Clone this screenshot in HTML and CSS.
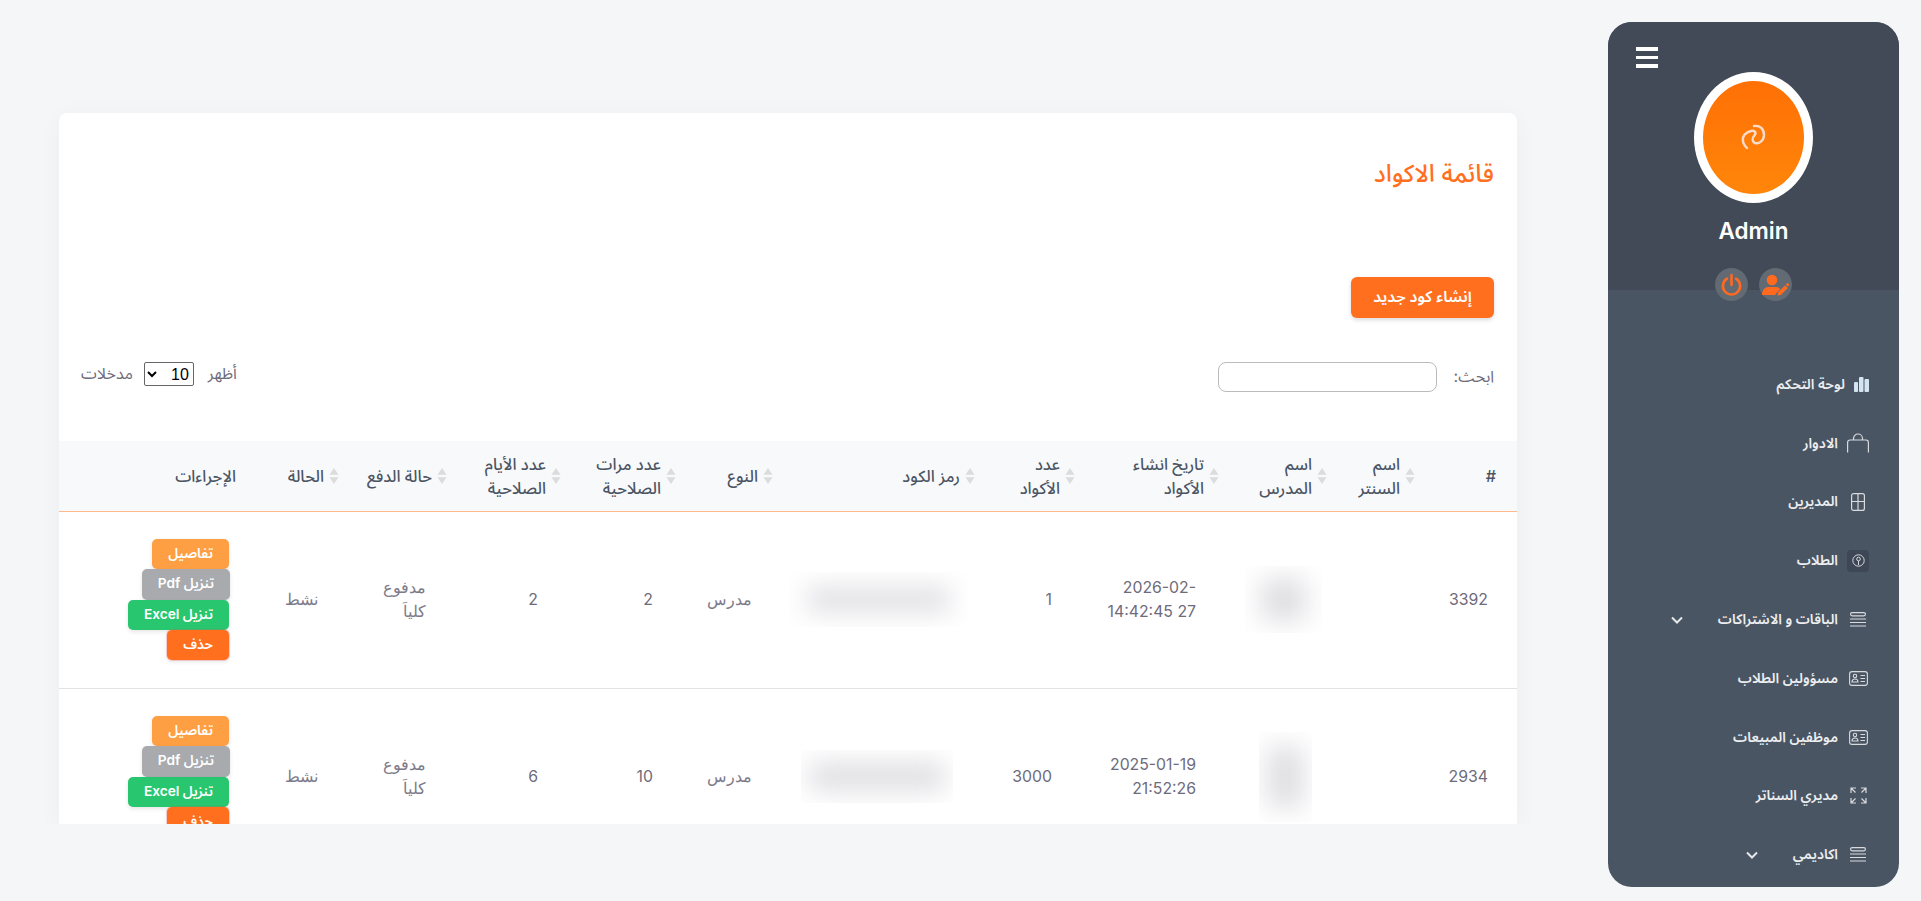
FILE: index.html
```html
<!DOCTYPE html>
<html lang="ar" dir="rtl">
<head>
  <meta charset="UTF-8">
  <title>قائمة الاكواد</title>
  <link rel="stylesheet" href="styles.css">
</head>
<body>

  <aside class="sidebar">
    <div class="side-head">
      <div class="burger"><span></span><span></span><span></span></div>
      <div class="avatar">
        <svg width="28" height="30" viewBox="0 0 28 30" fill="none" stroke="#fbdccb" stroke-width="2.4" stroke-linecap="round"><path d="M14 3c6-1 10 3 10 9 0 6-5 9-9 8-3-1-3-5-1-7"/><path d="M14 13c3-3 1-6-3-5-5 1-9 5-8 10 0 3 2 5 4 7"/></svg>
      </div>
      <div class="side-name">Admin</div>
      <div class="side-actions">
        <a class="round-btn"><svg width="27" height="22" viewBox="0 0 27 22" fill="#ff6a1f"><circle cx="10" cy="6" r="5.3"/><path d="M0 21c0-5 3-8 6-8h8c2 0 3.500 1 4.300 2l-4.800 5-.3 1z"/><path d="M15.500 21.500l.6-3.200 7-7.100 2.700 2.700-7 7z"/><path d="M23.800 10.500l1-1c.6-.5 1.300-.5 1.800 0l.4.400c.3.500.3 1.200-.2 1.700l-1 1z"/></svg></a>
        <a class="round-btn"><svg width="21" height="23" viewBox="0 0 21 23" fill="none" stroke="#ff6a1f" stroke-width="2.6" stroke-linecap="round"><path d="M10.500 2v10"/><path d="M6 5.600a8.600 8.600 0 1 0 9 0"/></svg></a>
      </div>
    </div>
    <nav class="side-nav">
      <a class="nav-item"><span class="nav-icon nav-icon-sm"><svg width="15" height="15" viewBox="0 0 15 15" fill="#d5e4f2"><rect x="0" y="5" width="4" height="10" rx="1"/><rect x="5" y="0" width="4.500" height="15" rx="1"/><rect x="10.500" y="2" width="4.500" height="13" rx="1"/></svg></span>لوحة التحكم</a>
      <a class="nav-item"><span class="nav-icon"><svg width="22" height="20" viewBox="0 0 22 20" fill="none" stroke="#d8dadd" stroke-width="1.200"><path d="M.6 19.500V9.500c0-1.500.9-2.500 2.400-2.500h16c1.500 0 2.400 1 2.400 2.500v10"/><path d="M6.500 7V5.500a4.500 4.500 0 0 1 9 0V7"/></svg></span>الادوار</a>
      <a class="nav-item"><span class="nav-icon"><svg width="14" height="18" viewBox="0 0 14 18" fill="none" stroke="#d8dadd" stroke-width="1.200"><rect x=".6" y=".6" width="12.800" height="16.800" rx="2"/><path d="M7 .6v16.800M.6 8.500h12.800"/></svg></span>المديرين</a>
      <a class="nav-item"><span class="nav-icon nav-icon-on"><svg width="13" height="13" viewBox="0 0 13 13" fill="none" stroke="#d8dadd" stroke-width="1"><circle cx="6.500" cy="6.500" r="5.700"/><circle cx="6.500" cy="5" r="1.800"/><path d="M6.500 7v4"/></svg></span>الطلاب</a>
      <a class="nav-item"><span class="nav-icon"><svg width="16" height="15" viewBox="0 0 16 15" fill="none" stroke="#d8dadd" stroke-width="1.200"><rect x=".6" y=".6" width="14.800" height="3.200" rx="1.500"/><path d="M0 7h16M0 10.500h16M0 14h16"/></svg></span>الباقات و الاشتراكات<svg class="chev" width="12" height="8" viewBox="0 0 12 8" fill="none" stroke="#e6e8eb" stroke-width="2"><path d="M1 1.500l5 5 5-5"/></svg></a>
      <a class="nav-item"><span class="nav-icon"><svg width="19" height="15" viewBox="0 0 19 15" fill="none" stroke="#d8dadd" stroke-width="1.100"><rect x=".6" y=".6" width="17.800" height="13.800" rx="2.500"/><circle cx="6" cy="5" r="1.700"/><path d="M3 11c0-2 1.300-3 3-3s3 1 3 3zM11.500 4.500h4.500M11.500 7.500h4.500M11.500 10.500h4.500"/></svg></span>مسؤولين الطلاب</a>
      <a class="nav-item"><span class="nav-icon"><svg width="19" height="15" viewBox="0 0 19 15" fill="none" stroke="#d8dadd" stroke-width="1.100"><rect x=".6" y=".6" width="17.800" height="13.800" rx="2.500"/><circle cx="6" cy="5" r="1.700"/><path d="M3 11c0-2 1.300-3 3-3s3 1 3 3zM11.500 4.500h4.500M11.500 7.500h4.500M11.500 10.500h4.500"/></svg></span>موظفين المبيعات</a>
      <a class="nav-item"><span class="nav-icon"><svg width="17" height="17" viewBox="0 0 17 17" fill="none" stroke="#d8dadd" stroke-width="1.200"><path d="M1 6V1h5M1 1l4.500 4.500M11 1h5v5M16 1l-4.500 4.500M1 11v5h5M1 16l4.500-4.500M16 11v5h-5M16 16l-4.500-4.500"/></svg></span>مديري السناتر</a>
      <a class="nav-item"><span class="nav-icon"><svg width="16" height="15" viewBox="0 0 16 15" fill="none" stroke="#d8dadd" stroke-width="1.200"><rect x=".6" y=".6" width="14.800" height="3.200" rx="1.500"/><path d="M0 7h16M0 10.500h16M0 14h16"/></svg></span>اكاديمي<svg class="chev" width="12" height="8" viewBox="0 0 12 8" fill="none" stroke="#e6e8eb" stroke-width="2"><path d="M1 1.500l5 5 5-5"/></svg></a>
    </nav>
  </aside>

  <main class="main">
    <section class="card">
      <div class="card-top">
        <h2 class="card-title">قائمة الاكواد</h2>
        <a class="btn-new">إنشاء كود جديد</a>
        <div class="filters">
          <label class="search-box">ابحث: <input type="text" class="search-input"></label>
          <label class="length-box">أظهر
            <select class="length-select"><option>10</option></select>
            مدخلات</label>
        </div>
      </div>

      <table class="codes">
        <colgroup>
          <col class="c-id"><col class="c-center"><col class="c-teacher"><col class="c-date"><col class="c-count"><col class="c-code"><col class="c-type"><col class="c-uses"><col class="c-days"><col class="c-pay"><col class="c-state"><col>
        </colgroup>
        <thead>
          <tr>
            <th class="th-plain">#</th>
            <th><div class="th-in"><svg class="sort" viewBox="0 0 10 16"><path d="M5 0l4.500 6.800h-9zM5 16L.5 9.200h9z"/></svg><span>اسم السنتر</span></div></th>
            <th><div class="th-in"><svg class="sort" viewBox="0 0 10 16"><path d="M5 0l4.500 6.800h-9zM5 16L.5 9.200h9z"/></svg><span>اسم المدرس</span></div></th>
            <th><div class="th-in"><svg class="sort" viewBox="0 0 10 16"><path d="M5 0l4.500 6.800h-9zM5 16L.5 9.200h9z"/></svg><span>تاريخ انشاء الأكواد</span></div></th>
            <th><div class="th-in"><svg class="sort" viewBox="0 0 10 16"><path d="M5 0l4.500 6.800h-9zM5 16L.5 9.200h9z"/></svg><span>عدد الأكواد</span></div></th>
            <th><div class="th-in"><svg class="sort" viewBox="0 0 10 16"><path d="M5 0l4.500 6.800h-9zM5 16L.5 9.200h9z"/></svg><span>رمز الكود</span></div></th>
            <th><div class="th-in"><svg class="sort" viewBox="0 0 10 16"><path d="M5 0l4.500 6.800h-9zM5 16L.5 9.200h9z"/></svg><span>النوع</span></div></th>
            <th><div class="th-in"><svg class="sort" viewBox="0 0 10 16"><path d="M5 0l4.500 6.800h-9zM5 16L.5 9.200h9z"/></svg><span>عدد مرات الصلاحية</span></div></th>
            <th><div class="th-in"><svg class="sort" viewBox="0 0 10 16"><path d="M5 0l4.500 6.800h-9zM5 16L.5 9.200h9z"/></svg><span>عدد الأيام الصلاحية</span></div></th>
            <th><div class="th-in"><svg class="sort" viewBox="0 0 10 16"><path d="M5 0l4.500 6.800h-9zM5 16L.5 9.200h9z"/></svg><span>حالة الدفع</span></div></th>
            <th><div class="th-in"><svg class="sort" viewBox="0 0 10 16"><path d="M5 0l4.500 6.800h-9zM5 16L.5 9.200h9z"/></svg><span>الحالة</span></div></th>
            <th class="th-plain">الإجراءات</th>
          </tr>
        </thead>
        <tbody>
          <tr>
            <td>3392</td>
            <td></td>
            <td><div class="blur-box blur-teacher1"><i></i></div></td>
            <td class="td-date"><bdi>2026-02-</bdi><br>27 14:42:45</td>
            <td>1</td>
            <td><div class="blur-box blur-code1"><i></i></div></td>
            <td class="td-ar">مدرس</td>
            <td>2</td>
            <td>2</td>
            <td class="td-ar">مدفوع كلياَ</td>
            <td class="td-ar">نشط</td>
            <td>
              <div class="acts">
                <a class="act act-info">تفاصيل</a>
                <a class="act act-pdf">تنزيل Pdf</a>
                <a class="act act-excel">تنزيل Excel</a>
                <a class="act act-del">حذف</a>
              </div>
            </td>
          </tr>
          <tr>
            <td>2934</td>
            <td></td>
            <td><div class="blur-box blur-teacher2"><i></i></div></td>
            <td class="td-date">2025-01-19 21:52:26</td>
            <td>3000</td>
            <td><div class="blur-box blur-code2"><i></i></div></td>
            <td class="td-ar">مدرس</td>
            <td>10</td>
            <td>6</td>
            <td class="td-ar">مدفوع كلياَ</td>
            <td class="td-ar">نشط</td>
            <td>
              <div class="acts">
                <a class="act act-info">تفاصيل</a>
                <a class="act act-pdf">تنزيل Pdf</a>
                <a class="act act-excel">تنزيل Excel</a>
                <a class="act act-del">حذف</a>
              </div>
            </td>
          </tr>
        </tbody>
      </table>
    </section>
  </main>

</body>
</html>
```

FILE: styles.css
```css
* {
  box-sizing: border-box;
}
html, body {
  height: 100%;
}
body {
  margin: 0;
  display: flex;
  overflow: hidden;
  background: #f5f6f8;
  font-family: Inter, "Noto Sans Arabic", "DejaVu Sans", sans-serif;
  font-size: 16px;
  color: #6e6b7b;
}

/* sidebar */
.sidebar {
  width: 291px;
  height: 865px;
  margin: 22px 22px 0 0;
  flex-shrink: 0;
  background: #4a5563;
  border-radius: 24px;
  overflow: hidden;
}
.side-head {
  position: relative;
  height: 268px;
  background: #414a56;
  padding-top: 50px;
  display: flex;
  flex-direction: column;
  align-items: center;
}
.burger {
  position: absolute;
  top: 25px;
  left: 28px;
  width: 22px;
  display: flex;
  flex-direction: column;
  gap: 5px;
}
.burger span {
  display: block;
  height: 3.500px;
  background: #fff;
}
.avatar {
  width: 119px;
  height: 131px;
  flex-shrink: 0;
  border: 9px solid #fff;
  border-radius: 50%;
  background: linear-gradient(#ff7005, #ff860a);
  display: flex;
  align-items: center;
  justify-content: center;
}
.side-name {
  margin-top: 13px;
  color: #fff;
  font-size: 22.500px;
  font-weight: 600;
  line-height: 30px;
}
.side-actions {
  margin-top: 22px;
  display: flex;
  gap: 11px;
}
.round-btn {
  width: 33px;
  height: 33px;
  border-radius: 50%;
  background: #626a74;
  display: flex;
  align-items: center;
  justify-content: center;
}
.side-nav {
  padding-top: 65px;
}
.nav-item {
  height: 58.800px;
  padding-right: 30px;
  display: flex;
  align-items: center;
  color: #eceef0;
  font-size: 14px;
  font-weight: 600;
}
.nav-icon {
  width: 22px;
  height: 22px;
  margin-left: 9px;
  border-radius: 4px;
  display: flex;
  align-items: center;
  justify-content: center;
  flex-shrink: 0;
}
.nav-icon-sm {
  width: 15px;
}
.nav-icon-on {
  background: #3e4756;
}
.chev {
  margin-right: 35px;
}

/* main card */
.main {
  flex: 1;
  padding: 113px 91px 0 59px;
}
.card {
  height: 711px;
  background: #fff;
  border-radius: 8px 8px 0 0;
  box-shadow: 0 4px 24px rgba(0, 0, 0, .04);
  clip-path: inset(-30px -30px 0 -30px);
  overflow: hidden;
}
.card-top {
  padding: 45px 23px 49px 22px;
}
.card-title {
  margin: 0;
  color: #ff6f1e;
  font-size: 24.500px;
  font-weight: 500;
  line-height: 30px;
}
.btn-new {
  display: block;
  width: 143px;
  height: 41px;
  margin-top: 89px;
  background: #ff6f1e;
  border-radius: 6px;
  box-shadow: 0 2px 4px rgba(0, 0, 0, .15);
  color: #fff;
  font-size: 15.700px;
  font-weight: 600;
  line-height: 39px;
  text-align: center;
}
.filters {
  margin-top: 44px;
  display: flex;
  justify-content: space-between;
  align-items: flex-start;
}
.search-box {
  display: flex;
  align-items: center;
  gap: 17px;
  height: 30px;
}
.search-input {
  width: 219px;
  height: 30px;
  border: 1px solid #bbb;
  border-radius: 8px;
  background: #fff;
}
.length-box {
  display: flex;
  align-items: center;
  gap: 12px;
  height: 24px;
  font-size: 16px;
}
.length-select {
  width: 50px;
  height: 24px;
  margin: 0 2px 0 -1px;
  font-family: "Liberation Sans", sans-serif;
  font-size: 16px;
  color: #000;
  background: #fff;
  border: 1px solid #666;
  border-radius: 2px;
}

/* table */
.codes {
  width: 100%;
  table-layout: fixed;
  border-collapse: collapse;
}
.c-id { width: 96px; }
.c-center { width: 88px; }
.c-teacher { width: 108px; }
.c-date { width: 144px; }
.c-count { width: 100px; }
.c-code { width: 202px; }
.c-type { width: 97px; }
.c-uses { width: 115px; }
.c-days { width: 114px; }
.c-pay { width: 108px; }
.c-state { width: 88px; }
.codes th {
  height: 70px;
  padding: 0 6px 0 14px;
  background: #f8f9fb;
  border-bottom: 1px solid #ffb98a;
  color: #4b5563;
  font-size: 16.200px;
  font-weight: 500;
  line-height: 24px;
  text-align: right;
}
.codes th.th-plain {
  padding-right: 21px;
}
.th-in {
  display: flex;
  align-items: center;
  gap: 5px;
}
.sort {
  width: 10px;
  height: 16px;
  flex-shrink: 0;
  fill: #dcdcdc;
}
.codes td {
  height: 177px;
  padding: 0 29px 0 21px;
  border-bottom: 1px solid #e3e3e3;
  font-size: 15.800px;
  line-height: 24px;
  text-align: right;
}
.codes td.td-ar {
  padding-right: 27px;
  font-family: "DejaVu Sans", sans-serif;
  font-size: 16px;
  font-weight: 300;
  color: #7d7a89;
}
.acts {
  display: flex;
  flex-direction: column;
  align-items: flex-start;
  margin-right: -1px;
}
.act {
  height: 30.250px;
  padding: 0 16px;
  border-radius: 5px;
  color: #fff;
  font-size: 13.700px;
  font-weight: 600;
  line-height: 28px;
  white-space: nowrap;
  box-shadow: 0 2px 4px rgba(0, 0, 0, .1);
}
.act-info { background: #ff9f43; }
.act-pdf { background: #a8aaae; margin-right: -1px; }
.act-excel { background: #28c76f; }
.act-del { background: #ff6f1e; box-shadow: 0 0 0 1px rgba(234, 84, 85, .25), 0 2px 4px rgba(0, 0, 0, .1); }

/* blurred cells */
.blur-box {
  overflow: hidden;
  background: #fff;
}
.blur-box i {
  display: block;
  height: 100%;
  background: #dfdfe3;
  filter: blur(13px);
}
.blur-teacher1 { width: 77px; height: 67px; padding: 12px 16px; margin: 0 -18px 0 0; }
.blur-code1 { width: 179px; height: 55px; padding: 15px 18px; margin: 0 -16px 0 0; }
.blur-teacher2 { width: 53px; height: 90px; padding: 14px 8px; margin: 0 -8px 0 0; }
.blur-code2 { width: 152px; height: 53px; padding: 12px 8px; margin: 0 -1px 0 0; }
```
